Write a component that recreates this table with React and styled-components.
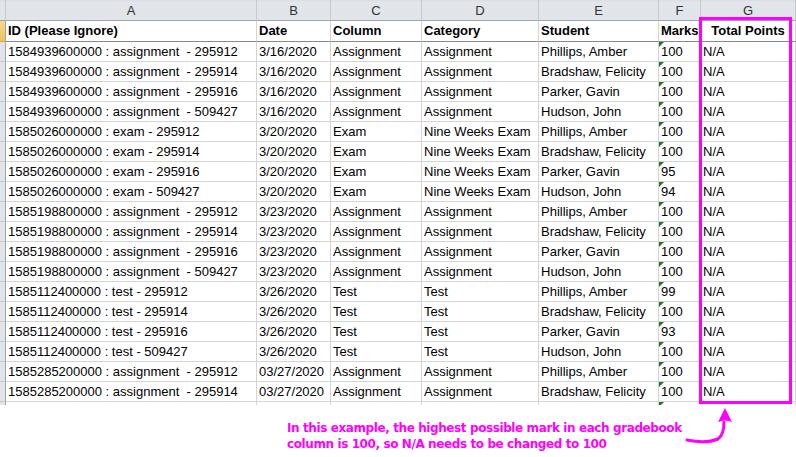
import React from 'react';
import styled, { createGlobalStyle } from 'styled-components';

const GlobalStyle = createGlobalStyle`
  html, body {
    margin: 0;
    padding: 0;
    background: #ffffff;
  }

  body {
    width: 796px;
    height: 457px;
    overflow: hidden;
    font-family: "Liberation Sans", Arial, sans-serif;
  }
`;

const Page = styled.div`
  display: flex;
  flex-direction: column;
  width: 796px;
  height: 457px;
  overflow: hidden;
`;

const SheetWrap = styled.div`
  position: relative;
  flex: none;
  height: 405px;
  overflow: hidden;
`;

const Sheet = styled.div`
  display: grid;
  grid-template-columns: 6px 251px 74px 91px 117px 120px 42px 1fr;
  grid-template-rows: 21px 21px;
  grid-auto-rows: 20px;
`;

const ColHead = styled.div`
  box-sizing: border-box;
  display: flex;
  align-items: center;
  justify-content: center;
  padding-top: 1px;

  font-size: 13px;
  color: #333;

  background: linear-gradient(#d9dce1 0, #e2e5ea 2px, #e1e4e9 100%);
  border-right: 1px solid #c6cad0;
  border-bottom: 1px solid #9ea3aa;
`;

const RowHead = styled.div`
  box-sizing: border-box;
  background: ${({ $sel }) => ($sel ? 'linear-gradient(#f9d790, #f2c25a)' : '#e1e4e9')};
  border-right: 1px solid #9ea3aa;
  border-bottom: 1px solid ${({ $sel }) => ($sel ? '#d9a53f' : '#c6cad0')};
`;

const Cell = styled.div`
  position: relative;
  box-sizing: border-box;
  padding: 0 2px;
  overflow: hidden;

  font-size: 13px;
  font-weight: ${({ $bold }) => ($bold ? 700 : 400)};
  line-height: 20px;
  text-align: ${({ $center }) => ($center ? 'center' : 'left')};
  white-space: pre;
  color: #000;

  border-right: 1px solid #d4d4d4;
  border-bottom: 1px solid ${({ $head }) => ($head ? '#8a8a8a' : '#d4d4d4')};

  ${({ $flag }) =>
    $flag &&
    `
    &::before {
      content: '';
      position: absolute;
      left: 0;
      top: 0;
      border-top: 5px solid #1e7a1e;
      border-right: 5px solid transparent;
    }
  `}
`;

const Outline = styled.div`
  position: absolute;
  left: 699px;
  top: 17px;
  width: 93px;
  height: 387px;
  box-sizing: border-box;
  border: 3px solid #ff00ff;
`;

const Note = styled.div`
  display: flex;
  align-items: flex-start;
  flex: none;
`;

const NoteText = styled.p`
  margin: 15px 0 0 287px;
  width: 400px;

  font-family: "DejaVu Sans", Verdana, sans-serif;
  font-size: 12px;
  font-weight: 700;
  letter-spacing: -0.4px;
  line-height: 16px;
  color: #ff00ff;
`;

const Arrow = styled.svg`
  display: block;
  flex: none;
  margin-left: -3px;
`;

const letters = ['A', 'B', 'C', 'D', 'E', 'F', 'G'];

const people = ['Phillips, Amber', 'Bradshaw, Felicity', 'Parker, Gavin', 'Hudson, John'];
const ids = ['295912', '295914', '295916', '509427'];

const groups = [
  { stamp: '1584939600000', kind: 'assignment ', date: '3/16/2020', column: 'Assignment', category: 'Assignment', marks: ['100', '100', '100', '100'] },
  { stamp: '1585026000000', kind: 'exam', date: '3/20/2020', column: 'Exam', category: 'Nine Weeks Exam', marks: ['100', '100', '95', '94'] },
  { stamp: '1585198800000', kind: 'assignment ', date: '3/23/2020', column: 'Assignment', category: 'Assignment', marks: ['100', '100', '100', '100'] },
  { stamp: '1585112400000', kind: 'test', date: '3/26/2020', column: 'Test', category: 'Test', marks: ['99', '100', '93', '100'] },
  { stamp: '1585285200000', kind: 'assignment ', date: '03/27/2020', column: 'Assignment', category: 'Assignment', marks: ['100', '100'] },
];

const rows = groups.flatMap((g) =>
  g.marks.map((mark, i) => ({
    id: `${g.stamp} : ${g.kind} - ${ids[i]}`,
    date: g.date,
    column: g.column,
    category: g.category,
    student: people[i],
    mark,
  }))
);

function App() {
  return (
    <Page>
      <GlobalStyle />
      <SheetWrap>
        <Sheet>
          <ColHead />
          {letters.map((l) => (
            <ColHead key={l}>{l}</ColHead>
          ))}

          <RowHead $sel />
          <Cell $head $bold>ID (Please Ignore)</Cell>
          <Cell $head $bold>Date</Cell>
          <Cell $head $bold>Column</Cell>
          <Cell $head $bold>Category</Cell>
          <Cell $head $bold>Student</Cell>
          <Cell $head $bold>Marks</Cell>
          <Cell $head $bold $center>Total Points</Cell>

          {rows.map((r, i) => (
            <React.Fragment key={i}>
              <RowHead />
              <Cell>{r.id}</Cell>
              <Cell>{r.date}</Cell>
              <Cell>{r.column}</Cell>
              <Cell>{r.category}</Cell>
              <Cell>{r.student}</Cell>
              <Cell $flag>{r.mark}</Cell>
              <Cell>N/A</Cell>
            </React.Fragment>
          ))}

          <RowHead />
          <Cell />
          <Cell />
          <Cell />
          <Cell />
          <Cell />
          <Cell $flag />
          <Cell />
        </Sheet>
        <Outline />
      </SheetWrap>

      <Note>
        <NoteText>
          In this example, the highest possible mark in each gradebook column is 100, so N/A needs to be
          changed to 100
        </NoteText>
        <Arrow width="52" height="45" viewBox="0 0 52 45">
          <path
            d="M3 35 Q22 39 34 34 Q40 30 40 17"
            fill="none"
            stroke="#ff00ff"
            strokeWidth="3"
            strokeLinecap="round"
          />
          <path d="M41 3 L48 17 Q41 14 34 17 Z" fill="#ff00ff" />
        </Arrow>
      </Note>
    </Page>
  );
}

export default App;
